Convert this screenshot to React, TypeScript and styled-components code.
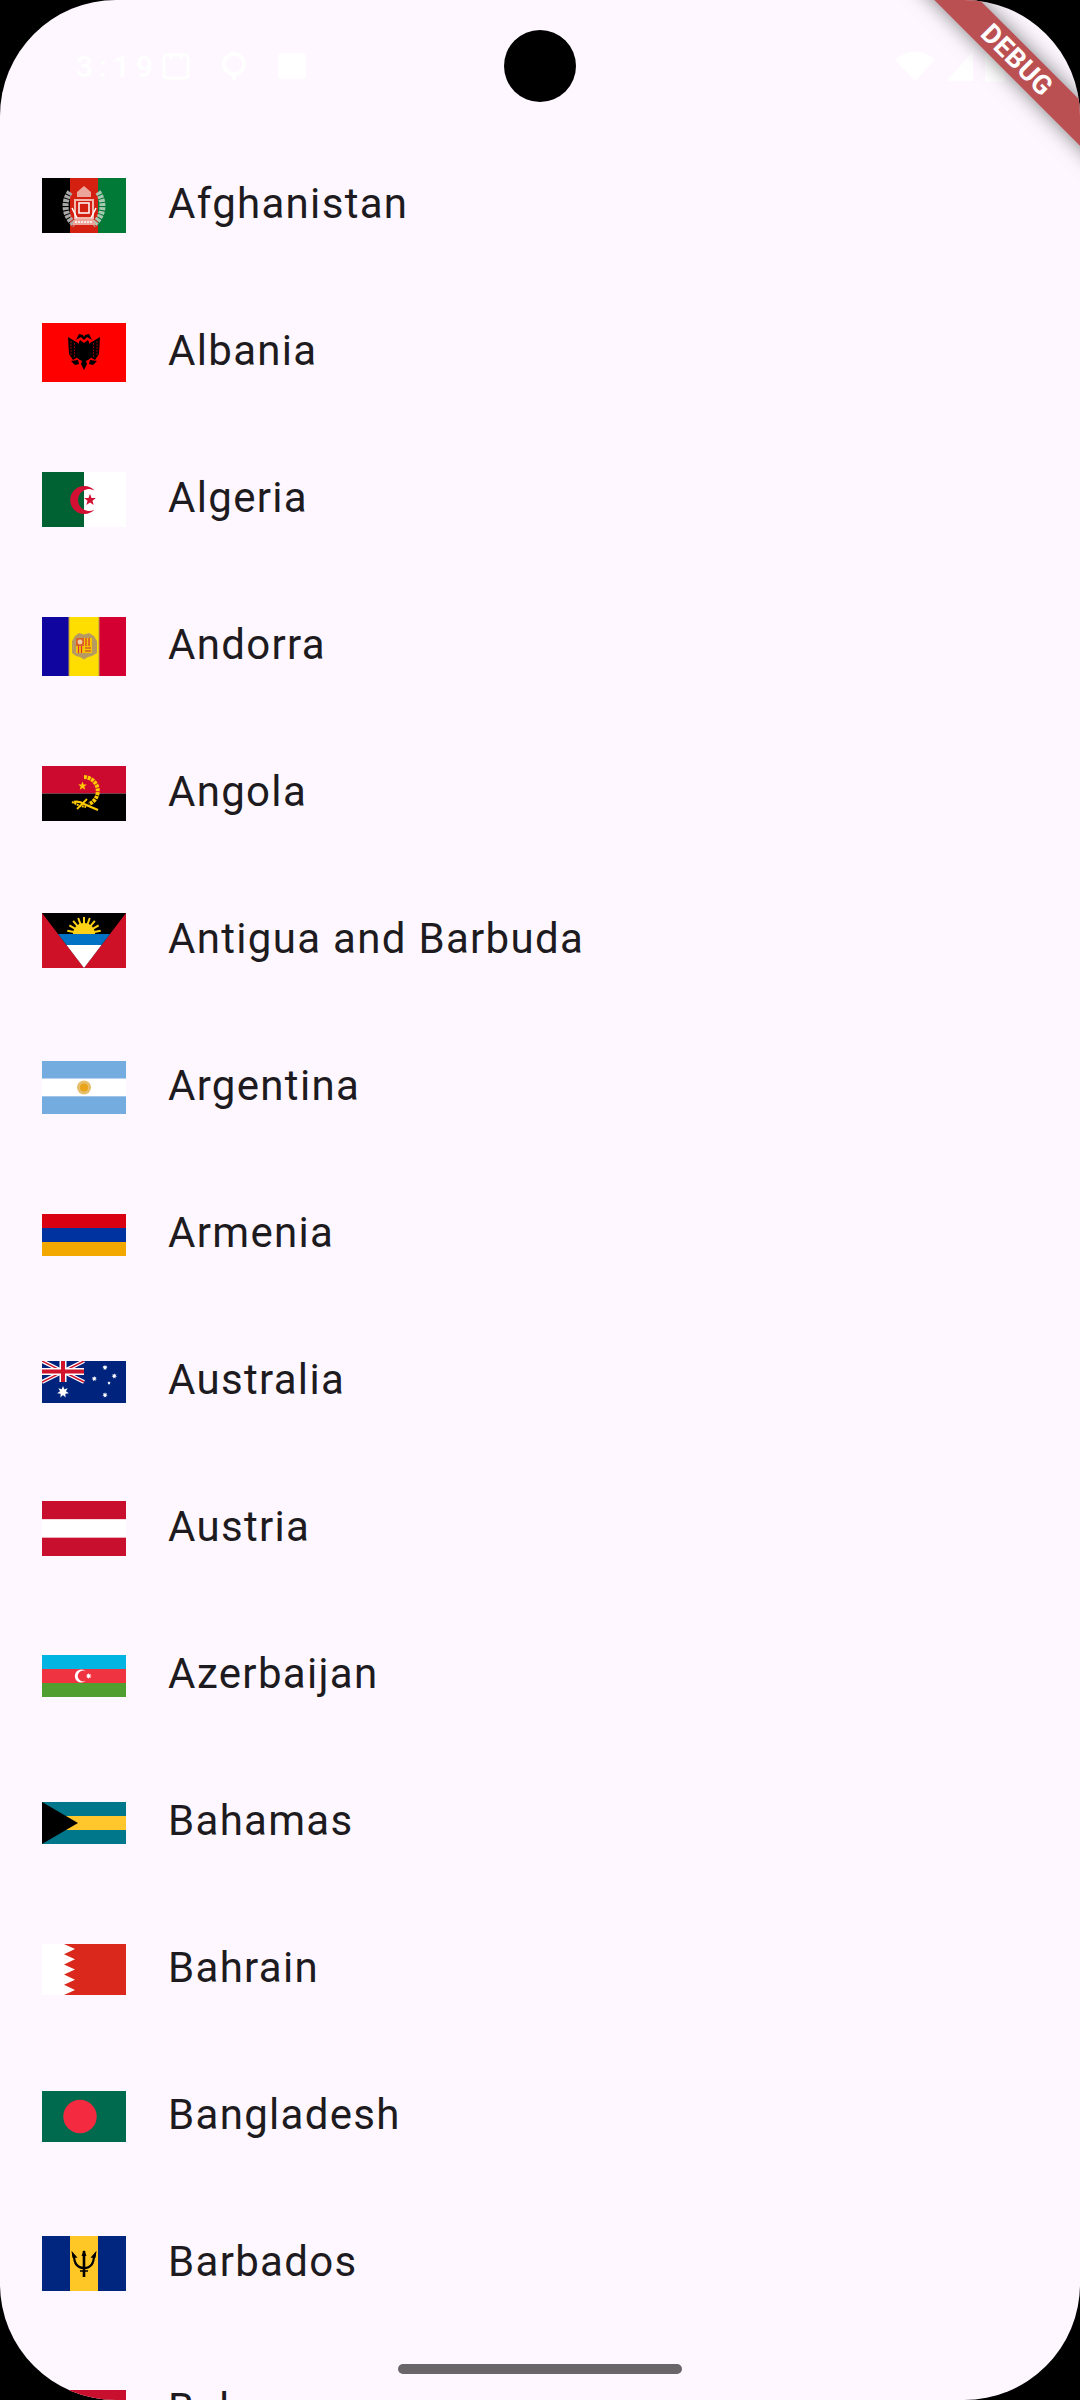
import type { ReactNode } from 'react'
import styled, { createGlobalStyle } from 'styled-components'

const GlobalStyle = createGlobalStyle`
  html, body {
    margin: 0;
    padding: 0;
    background: #000;
  }
`

const Screen = styled.div`
  position: relative;
  width: 1080px;
  height: 2400px;
  border-radius: 116px;
  overflow: hidden;
  background-color: #fef7ff;
  font-family: Roboto, 'Liberation Sans', sans-serif;
`

const StatusBar = styled.div`
  display: flex;
  justify-content: space-between;
  align-items: center;
  box-sizing: border-box;
  height: 132px;
  padding: 0 75px 0 76px;
  color: #fff;
`

const StatusGroup = styled.div`
  display: flex;
  align-items: center;
  gap: ${(props: { $gap: number }) => props.$gap}px;
`

const Clock = styled.span`
  width: 57px;
  font-size: 30px;
  font-weight: 500;
  letter-spacing: 6px;
  white-space: nowrap;
`

const Camera = styled.div`
  position: absolute;
  top: 30px;
  left: 504px;
  width: 72px;
  height: 72px;
  border-radius: 50%;
  background-color: #000;
`

const Banner = styled.div`
  position: absolute;
  top: 44px;
  left: 867px;
  width: 300px;
  height: 32px;
  line-height: 32px;
  text-align: center;
  transform: rotate(45deg);
  background-color: #bb5053;
  box-shadow: 0 0 20px rgba(0, 0, 0, 0.5);
  color: #fff;
  font-size: 27px;
  font-weight: 700;
  letter-spacing: 0.5px;
`

const HomeBar = styled.div`
  position: absolute;
  left: 398px;
  bottom: 26px;
  width: 284px;
  height: 10px;
  border-radius: 5px;
  background-color: #696569;
`

const Row = styled.div`
  display: flex;
  align-items: center;
  gap: 42px;
  height: 147px;
  padding-left: 42px;
`

const Flag = styled.svg`
  display: block;
  flex: none;
  width: 84px;
`

const Name = styled.span`
  padding-bottom: 3px;
  color: #1d1b20;
  font-size: 42px;
  line-height: 62px;
  letter-spacing: 1.31px;
`

const star = (cx: number, cy: number, r: number, n = 5, inner = 0.42) => {
  const pts: string[] = []
  for (let i = 0; i < n * 2; i++) {
    const rad = i % 2 ? r * inner : r
    const a = (Math.PI * i) / n - Math.PI / 2
    pts.push(`${(cx + rad * Math.cos(a)).toFixed(2)},${(cy + rad * Math.sin(a)).toFixed(2)}`)
  }
  return pts.join(' ')
}

const stripes = (colors: string[], h: number) =>
  colors.map((c, i) => (
    <rect key={c + i} x="0" y={(h / colors.length) * i} width="84" height={h / colors.length + 0.1} fill={c} />
  ))

const sunRays = (cx: number, cy: number, r: number, start: number, end: number, n: number) => {
  const out: string[] = []
  for (let i = 0; i < n; i++) {
    const a = start + ((end - start) * i) / (n - 1)
    out.push(`M${cx + 5 * Math.cos(a)} ${cy + 5 * Math.sin(a)}L${cx + r * Math.cos(a)} ${cy + r * Math.sin(a)}`)
  }
  return out.join('')
}

interface ICountry {
  name: string
  height: number
  art: ReactNode
}

const countries: ICountry[] = [
  {
    name: 'Afghanistan',
    height: 55,
    art: (
      <>
        <rect width="28" height="55" fill="#000" />
        <rect x="28" width="28" height="55" fill="#d32011" />
        <rect x="56" width="28" height="55" fill="#007a36" />
        <path d="M28 14C21 24 22 38 33 47" fill="none" stroke="#a9a9a9" strokeWidth="6" strokeDasharray="3 1" />
        <path d="M56 14C63 24 62 38 51 47" fill="none" stroke="#a8c8b2" strokeWidth="6" strokeDasharray="3 1" />
        <path d="M35 14L42 8L49 14V19H35ZM33 40H51L54 47H30Z" fill="#eba59a" />
        <path d="M33 22H51V40H33Z" fill="none" stroke="#f2b8ae" strokeWidth="2" />
        <path d="M37 25H47V35H37ZM30 30L35 40M54 30L49 40" fill="none" stroke="#fff" strokeWidth="1.5" />
        <path d="M33 44H51" stroke="#fff" strokeWidth="1.4" strokeDasharray="2 1" />
      </>
    ),
  },
  {
    name: 'Albania',
    height: 59,
    art: (
      <>
        <rect width="84" height="59" fill="#ff0000" />
        <path
          d="M42 17L39 14L34 17L37 11L41 12L42 14L43 12L47 11L50 17L45 14ZM38 17L42 20L46 17L49 24V35L46 37L44 38L45 41L42 47L39 41L40 38L38 37L35 35V24Z"
          fill="#000"
        />
        <path
          d="M36 20L26 14L27 31L31 37L36 34ZM48 20L58 14L57 31L53 37L48 34ZM36 37L29 38L33 42L37 41ZM48 37L55 38L51 42L47 41Z"
          fill="#000"
        />
        <path d="M29 18V32M32.500 20V34M55 18V32M51.500 20V34" stroke="#e00000" strokeWidth="0.6" strokeDasharray="2 1" />
      </>
    ),
  },
  {
    name: 'Algeria',
    height: 55,
    art: (
      <>
        <rect width="84" height="55" fill="#fff" />
        <rect width="42" height="55" fill="#006233" />
        <path d="M52.5 18.5A14 14 0 1 0 52.5 37.5A11 11 0 1 1 52.5 18.5Z" fill="#d21034" />
        <polygon points={star(48, 28, 6.2)} fill="#d21034" />
      </>
    ),
  },
  {
    name: 'Andorra',
    height: 59,
    art: (
      <>
        <rect width="27" height="59" fill="#10069f" />
        <rect x="27" width="30" height="59" fill="#fedd00" />
        <rect x="57" width="27" height="59" fill="#d50032" />
        <path d="M27 0V59M57 0V59" stroke="#b99a4a" strokeWidth="1" />
        <path d="M33 19L37 16L42 17.5L47 16L52 19L55 24V36L50 39L46 40L42 42.5L38 40L34 39L30 36V24Z" fill="#b69a62" />
        <rect x="34" y="21" width="8" height="8" fill="#d9622b" />
        <circle cx="38" cy="25" r="2.4" fill="#f3cfa0" />
        <rect x="42" y="21" width="8" height="8" fill="#f5c400" />
        <path d="M44 21V29M47 21V29" stroke="#d33" strokeWidth="1.2" />
        <rect x="34" y="29" width="8" height="7" fill="#f5c400" />
        <path d="M36.500 29V36M39.500 29V36" stroke="#d33" strokeWidth="1.2" />
        <rect x="42" y="29" width="8" height="7" fill="#f5c400" />
        <path d="M43 31H49M43 34H49" stroke="#d9622b" strokeWidth="1.3" />
      </>
    ),
  },
  {
    name: 'Angola',
    height: 55,
    art: (
      <>
        <rect width="84" height="27.5" fill="#cc092f" />
        <rect y="27.500" width="84" height="27.5" fill="#000" />
        <path d="M42 11A14 14 0 0 1 47 38" fill="none" stroke="#ffcb00" strokeWidth="4" strokeDasharray="3 0.8" />
        <polygon points={star(40.5, 20, 4.6)} fill="#ffcb00" />
        <path d="M32 36C36 35 39 36 42 38L56 44" fill="none" stroke="#ffcb00" strokeWidth="2.4" />
        <path d="M30 36L38 40L44 41" fill="none" stroke="#ffcb00" strokeWidth="2" strokeDasharray="2 0.7" />
        <path d="M35 43L45 33" stroke="#ffcb00" strokeWidth="1.8" />
      </>
    ),
  },
  {
    name: 'Antigua and Barbuda',
    height: 55,
    art: (
      <>
        <rect width="84" height="55" fill="#ce1126" />
        <polygon points="0,0 84,0 42,55" fill="#000" />
        <path d={sunRays(42, 21, 17, Math.PI * 1.06, Math.PI * 1.94, 9)} stroke="#fcd116" strokeWidth="2" />
        <path d="M31 21A11 11 0 0 1 53 21Z" fill="#fcd116" />
        <polygon points="16,21 68,21 59.500,32 24.500,32" fill="#0072c6" />
        <polygon points="24.500,32 59.500,32 42,55" fill="#fff" />
      </>
    ),
  },
  {
    name: 'Argentina',
    height: 53,
    art: (
      <>
        {stripes(['#74acdf', '#fff', '#74acdf'], 53)}
        <circle cx="42" cy="26.500" r="7" fill="#e6bf6c" />
        <circle cx="42" cy="26.500" r="4" fill="#e9a41a" />
      </>
    ),
  },
  {
    name: 'Armenia',
    height: 42,
    art: <>{stripes(['#d90012', '#0033a0', '#f2a800'], 42)}</>,
  },
  {
    name: 'Australia',
    height: 42,
    art: (
      <>
        <rect width="84" height="42" fill="#00247d" />
        <path d="M0 0L42 21M42 0L0 21" stroke="#fff" strokeWidth="4" />
        <path d="M0 0L42 21M42 0L0 21" stroke="#cf142b" strokeWidth="1.4" />
        <path d="M21 0V21M0 10.500H42" stroke="#fff" strokeWidth="7" />
        <path d="M21 0V21M0 10.500H42" stroke="#cf142b" strokeWidth="4" />
        <polygon points={star(21, 31, 6, 7, 0.5)} fill="#fff" />
        <polygon points={star(63, 6.500, 2.800, 7, 0.5)} fill="#fff" />
        <polygon points={star(72.300, 15, 2.800, 7, 0.5)} fill="#fff" />
        <polygon points={star(52.300, 17.700, 2.800, 7, 0.5)} fill="#fff" />
        <polygon points={star(67, 22, 1.800, 5, 0.5)} fill="#fff" />
        <polygon points={star(63, 34, 2.800, 7, 0.5)} fill="#fff" />
      </>
    ),
  },
  {
    name: 'Austria',
    height: 55,
    art: <>{stripes(['#c8102e', '#fff', '#c8102e'], 55)}</>,
  },
  {
    name: 'Azerbaijan',
    height: 42,
    art: (
      <>
        {stripes(['#00b5e2', '#ef3340', '#509e2f'], 42)}
        <path d="M44 16.500A6.500 6.500 0 1 0 44 25.500A5.300 5.300 0 1 1 44 16.500Z" fill="#fff" />
        <polygon points={star(46.700, 21, 3, 8, 0.5)} fill="#fff" />
      </>
    ),
  },
  {
    name: 'Bahamas',
    height: 42,
    art: (
      <>
        {stripes(['#00778b', '#ffc72c', '#00778b'], 42)}
        <polygon points="0,0 36,21 0,42" fill="#000" />
      </>
    ),
  },
  {
    name: 'Bahrain',
    height: 51,
    art: (
      <>
        <rect width="84" height="51" fill="#da291c" />
        <polygon
          points="0,0 22,0 33,5.100 22,10.200 33,15.300 22,20.400 33,25.500 22,30.600 33,35.700 22,40.800 33,45.900 22,51 0,51"
          fill="#fff"
        />
      </>
    ),
  },
  {
    name: 'Bangladesh',
    height: 51,
    art: (
      <>
        <rect width="84" height="51" fill="#006a4e" />
        <circle cx="38" cy="25.500" r="16.700" fill="#f42a41" />
      </>
    ),
  },
  {
    name: 'Barbados',
    height: 55,
    art: (
      <>
        <rect width="84" height="55" fill="#00267f" />
        <rect x="28" width="28" height="55" fill="#ffc726" />
        <path d="M42 15V41" stroke="#000" strokeWidth="2.6" />
        <path d="M42 14L39.500 20H44.500Z" fill="#000" />
        <path d="M32 19C32 27 35 32 42 32C49 32 52 27 52 19" fill="none" stroke="#000" strokeWidth="2.2" />
        <path d="M30.500 17L34 21H31ZM53.500 17L50 21H53ZM38 35H46" fill="#000" stroke="#000" strokeWidth="1.4" />
      </>
    ),
  },
  {
    name: 'Belarus',
    height: 42,
    art: (
      <>
        <rect width="84" height="28" fill="#c8102e" />
        <rect y="28" width="84" height="14" fill="#007a33" />
      </>
    ),
  },
]

export default function App() {
  return (
    <Screen>
      <GlobalStyle />
      <StatusBar>
        <StatusGroup $gap={29}>
          <Clock>3:19</Clock>
          <svg width="28" height="28" viewBox="0 0 28 28">
            <rect x="2" y="3" width="24" height="23" rx="3" fill="none" stroke="#fff" strokeWidth="3" />
            <path d="M9 1V7M19 1V7" stroke="#fff" strokeWidth="3" />
          </svg>
          <svg width="30" height="30" viewBox="0 0 30 30">
            <circle cx="15" cy="13" r="10" fill="none" stroke="#fff" strokeWidth="4" />
            <path d="M15 23V29" stroke="#fff" strokeWidth="4" />
          </svg>
          <svg width="28" height="26" viewBox="0 0 28 26">
            <rect width="28" height="26" rx="3" fill="#fff" />
          </svg>
        </StatusGroup>
        <StatusGroup $gap={12}>
          <svg width="40" height="30" viewBox="0 0 40 30">
            <path d="M0 9C11-2 29-2 40 9L20 30Z" fill="#fff" />
          </svg>
          <svg width="26" height="30" viewBox="0 0 26 30">
            <polygon points="26,0 26,30 0,30" fill="#fff" />
          </svg>
          <svg width="20" height="32" viewBox="0 0 20 32">
            <path d="M5 4V0H15V4H20V32H0V4Z" fill="#fff" />
          </svg>
        </StatusGroup>
      </StatusBar>
      {countries.map((c) => (
        <Row key={c.name}>
          <Flag height={c.height} viewBox={`0 0 84 ${c.height}`}>
            {c.art}
          </Flag>
          <Name>{c.name}</Name>
        </Row>
      ))}
      <Camera />
      <Banner>DEBUG</Banner>
      <HomeBar />
    </Screen>
  )
}
